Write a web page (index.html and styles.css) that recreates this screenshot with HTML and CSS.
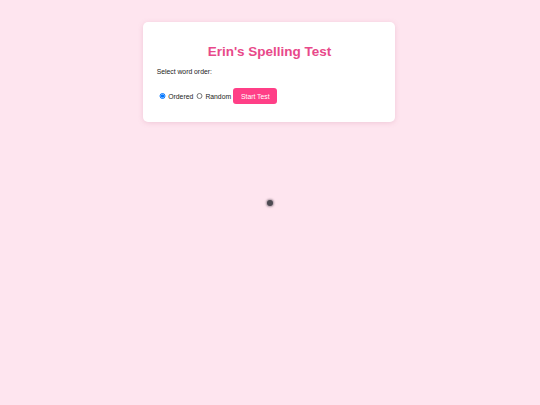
FILE: index.html
```html
<!DOCTYPE html>
<html lang="en">
<head>
<meta charset="utf-8">
<title>Erin's Spelling Test</title>
<link rel="stylesheet" href="styles.css">
</head>
<body>
<div class="card">
  <h1 class="title">Erin's Spelling Test</h1>
  <p class="prompt">Select word order:</p>
  <div class="options">
    <label class="opt"><input type="radio" name="order" class="radio" checked><span>Ordered</span></label>
    <label class="opt"><input type="radio" name="order" class="radio"><span>Random</span></label>
    <button class="start">Start Test</button>
  </div>
</div>
<div class="dot"></div>
</body>
</html>
```

FILE: styles.css
```css
html, body {
  margin: 0;
  padding: 0;
}
body {
  background: #fee5ef;
  font-family: "Liberation Sans", Arial, sans-serif;
  width: 540px;
  height: 405px;
  position: relative;
  overflow: hidden;
  padding-right: 2px;
  box-sizing: border-box;
}
.card {
  width: 252px;
  box-sizing: border-box;
  margin: 22px auto 0;
  padding: 12.7px 12.7px 12.7px 13.7px;
  background: #ffffff;
  border-radius: 5px;
  box-shadow: 0 1px 5px rgba(200, 120, 150, 0.25);
}
.title {
  font-size: 13.5px;
  line-height: 15.5px;
  margin: 9px 0;
  text-align: center;
  color: #e8498a;
  font-weight: bold;
}
.prompt {
  font-size: 6.8px;
  line-height: 8px;
  margin: 0;
  color: #222;
}
.options {
  display: flex;
  align-items: center;
  margin: 12px 0 5.5px;
  height: 16px;
  font-size: 6.8px;
  color: #222;
}
.opt {
  display: flex;
  align-items: center;
}
.radio {
  width: 6.5px;
  height: 6.5px;
  margin: 0 2.7px 0 2.4px;
}
.opt + .opt .radio {
  margin-left: 3px;
}
.start {
  margin-left: 2.2px;
  height: 16px;
  width: 44px;
  padding: 0;
  border: none;
  border-radius: 3px;
  background: #ff3f87;
  color: #ffffff;
  font-family: "Liberation Sans", Arial, sans-serif;
  font-size: 6.8px;
}
.dot {
  position: absolute;
  left: 266.5px;
  top: 199.5px;
  width: 6px;
  height: 6px;
  border-radius: 50%;
  background: #4d4a52;
  box-shadow: 0 0 2px 1px rgba(70, 60, 70, 0.45);
}
```
